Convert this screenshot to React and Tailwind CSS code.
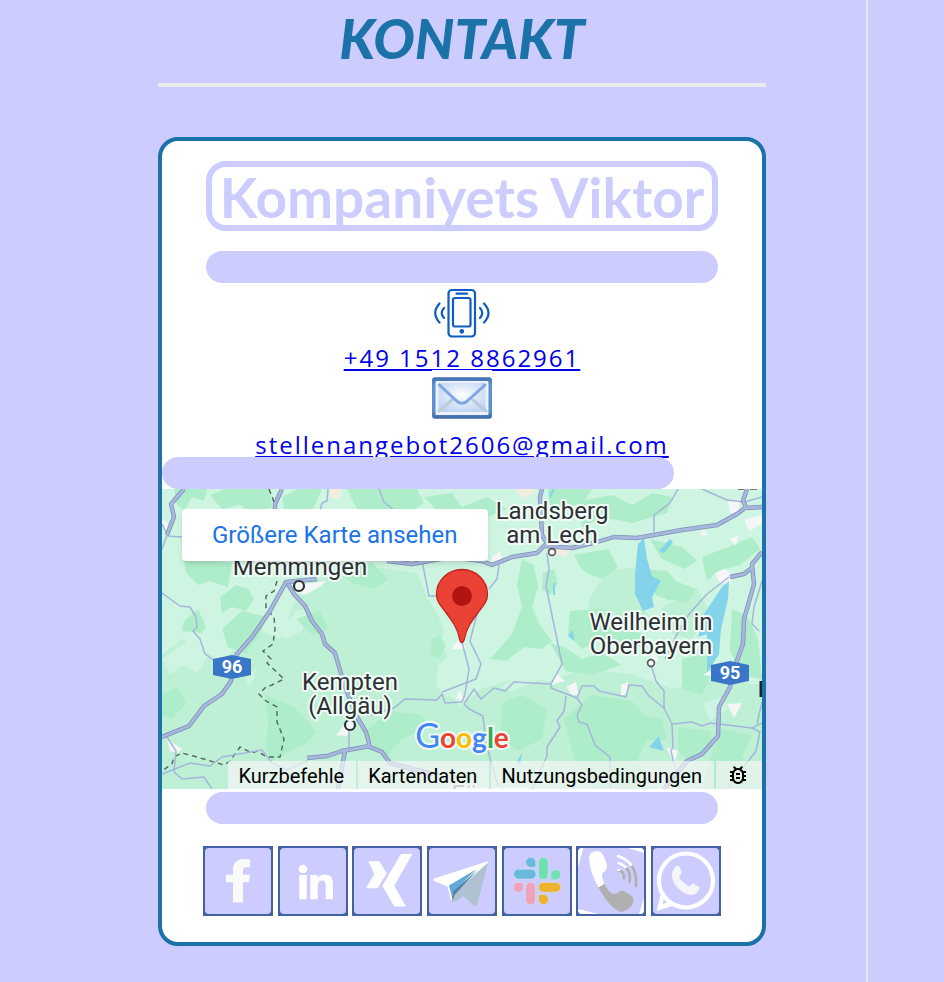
import React from "react";

const MID_PATCHES = [
  "M0 165L20 150L60 172L95 140L118 150L135 108L165 100L190 92L235 96L262 108L270 150L285 165L280 200L300 218L318 200L352 190L388 192L420 180L470 185L510 200L545 190L600 196V300H0Z",
  "M135 108L150 92L200 76L255 84L260 96L266 110L276 126L282 142L276 160L272 190L150 200Z",
  "M428 108L445 82L475 78L474 110L488 128L470 140L440 146L425 130Z",
  "M500 118L535 100L548 122L530 150L512 146L500 134Z",
];

const DARK_PATCHES = [
  "M12 0H45L42 12L30 8L22 22L14 14Z",
  "M48 6L62 0H108L110 18L94 28L78 16L60 20Z",
  "M120 8L135 0H160L150 22L122 20Z",
  "M185 0H255L262 14L240 30L214 20L196 22Z",
  "M262 8L290 4L300 18L325 8L345 20L320 30L280 26Z",
  "M386 0H430L424 10L404 22L388 18Z",
  "M418 12L450 6L470 16L490 4L510 8L505 24L470 34L440 28L420 38Z",
  "M20 60L55 72L70 74L66 98L48 92L36 96L24 84Z",
  "M58 108L74 96L86 100L92 110L84 122L70 118L60 124Z",
  "M22 132L36 120L44 138L40 144L20 142Z",
  "M60 140L80 122L106 128L96 148L84 165L66 158Z",
  "M175 80L210 74L226 90L212 100L190 94Z",
  "M134 130L158 122L166 140L150 146Z",
  "M360 70L372 76L376 98L370 118L378 136L390 152L380 160L362 158L344 172L328 170L350 145L360 118L355 96Z",
  "M381 84L392 80L396 94L388 106L380 100Z",
  "M412 66L446 60L456 78L440 90L424 84L418 78Z",
  "M478 80L506 82L520 100L508 112L494 106L486 94Z",
  "M488 50L520 58L535 72L522 80L500 70Z",
  "M540 68L566 58L590 48L598 60L578 76L556 82L545 92Z",
  "M408 122L440 120L466 140L486 146L480 158L440 150L420 160L406 146Z",
  "M388 154L402 158L420 170L440 164L460 176L430 186L404 182Z",
  "M503 88L534 100L525 114L508 110Z",
  "M570 120L586 128L596 150L600 190L578 186L568 160Z",
  "M104 206L118 212L132 218L146 232L154 244L142 256L124 264L110 272L104 258L106 236Z",
  "M270 150L278 146L284 158L276 170L268 164Z",
  "M203 242L228 222L260 226L266 238L240 250L224 268L214 260Z",
  "M340 214L360 206L385 220L380 250L356 262L338 250Z",
  "M402 230L430 206L470 212L482 226L500 230L505 250L484 252L476 270L488 300H430L412 270Z",
  "M520 170L542 164L552 180L540 206L520 200Z",
  "M516 238L548 242L552 258L528 272L516 262Z",
  "M560 240L590 246L580 268L600 284V300H540L548 270Z",
  "M0 205L16 198L24 214L10 230L0 226Z",
  "M420 262L440 256L450 276L436 290L418 280Z",
];

const LIGHT_PATCHES = [
  "M0 170L28 150L46 168L36 184L20 176L8 186Z",
  "M116 144L134 122L148 118L140 142L124 150Z",
  "M276 176L300 158L312 176L306 196L284 208L274 196Z",
  "M338 198L352 190L386 186L366 196L350 202Z",
  "M505 184L524 172L530 188L512 196Z",
  "M450 160L474 150L482 168L464 176Z",
  "M540 214L560 208L566 220L548 232Z",
  "M84 190L94 178L92 190L86 196Z",
];

const SAND_PATCHES = [
  "M168 0H180L178 10L168 9Z",
  "M352 0H374L372 4L362 9Z",
  "M388 56L412 58L402 68L388 63Z",
];

const URBAN_PATCHES = [
  "M136 96L164 92L158 98L142 106L136 103Z",
  "M330 68L338 62L340 70L330 73Z",
  "M566 12L578 10L576 24L568 24Z",
  "M583 30L600 26V34L588 42L584 36Z",
  "M537 46L542 40L546 47Z",
  "M568 50L577 46L574 57Z",
  "M289 160L296 151L304 158L303 160Z",
  "M553 84L562 80L572 86L568 95L558 94Z",
  "M389 196L395 185L403 192Z",
  "M404 198L414 193L416 206L410 206Z",
  "M459 196L466 193L465 204L459 207Z",
  "M565 215L580 214L572 229Z",
  "M174 246L184 234L192 240L184 247Z",
  "M5 250L20 260L16 264L8 262Z",
  "M294 210L298 201L301 210Z",
  "M541 186L548 181L550 187Z",
  "M504 258L516 262L512 274Z",
  "M488 168L494 164L496 172L490 174Z",
  "M0 30L6 34L4 42L0 38Z",
];

const WATER = [
  "M473 85L476 55L482 49L485 70L490 87L499 92L490 108L492 118L481 122L473 105Z",
  "M497 62L508 50L511 53L502 64Z",
  "M560 98L567 92L566 110L559 140L557 165L545 184V145L536 148L542 125Z",
  "M406 147L411 141L412 152Z",
  "M487 258L497 247L499 254L502 262Z",
  "M354 274L360 264L358 276Z",
  "M391 0H393L388 10L387 6Z",
  "M391 94H393V106H391Z",
];

const MINOR_ROADS = [
  "M385 64L387 80L384 97L400 175L389 195L389 199L415 209L420 197H432L437 202L464 208L467 196L480 197L487 207L502 219L510 235L530 233L540 237L548 234L590 239L598 243L594 262L565 300",
  "M489 176L494 192L502 202V219",
  "M510 235L511 258L509 262L518 300",
  "M590 239L600 234",
  "M389 195L352 193L343 202L332 199L319 210L312 200L302 215L307 220L321 227L324 255L337 300",
  "M300 153L307 180L303 205L300 213L283 214L280 205L275 211L243 210L232 219L205 227",
  "M315 125L308 152L319 175L314 190L280 203",
  "M260 72L267 107H275",
  "M337 76L335 90L327 100",
  "M404 207L402 222L395 232L398 238L385 258V267L370 300",
  "M415 209L420 216L415 226L417 233L425 235L433 256L448 268V300",
  "M0 104L18 117L28 118L34 128L35 138L31 142L38 150L43 165L53 172",
  "M217 0L222 13L235 24",
  "M516 0L508 14L492 26V43",
  "M540 0L565 11L583 13L600 8",
  "M567 88L545 105L527 125L515 145L503 170",
  "M0 285L28 274L48 277L60 268L100 261L110 274L125 281L145 272",
  "M5 248L14 262L12 283L20 290L42 288L50 300",
  "M187 240V262",
  "M166 0L165 12L160 14L158 22",
  "M0 35L6 47L20 48M5 46L0 60",
  "M600 92L592 118L590 135L597 142",
  "M600 213L595 235",
];

const MAJOR_ROADS = [
  "M0 248L27 237L42 217L60 205L69 192L70 180L75 165L90 148L108 122L124 93L155 90",
  "M126 95L132 105L143 117L150 132L160 145L163 155L173 164L182 195L195 228L204 243L208 258L220 263L228 274L247 279L270 285",
  "M145 269L165 267L180 262L208 257",
  "M183 262L176 300",
  "M22 0L9 15L12 28L5 46",
  "M120 0L113 15V25",
  "M225 72L250 75L290 68L320 72L330 76L350 68L375 64L385 54L380 46L378 8L380 0",
  "M383 57L410 59L435 53L452 48L475 49L520 41L555 36L575 25L583 19L600 18",
  "M585 20L581 12L585 0",
  "M600 63L590 75L592 95L582 130L581 155L572 180L568 198L557 218L556 247L540 265L525 272L502 300",
  "M568 88L582 85L591 78",
];

const PLACES = [
  { text: "Landsberg", x: 390, y: 30 },
  { text: "am Lech", x: 390, y: 54 },
  { text: "Memmingen", x: 138, y: 86 },
  { text: "Weilheim in", x: 489, y: 141 },
  { text: "Oberbayern", x: 489, y: 165 },
  { text: "Kempten", x: 188, y: 201 },
  { text: "(Allgäu)", x: 188, y: 225 },
];

function Shapes({ paths, fill }) {
  return (
    <g fill={fill}>
      {paths.map((d) => (
        <path key={d} d={d} />
      ))}
    </g>
  );
}

function Lines({ paths, stroke, width }) {
  return (
    <g fill="none" stroke={stroke} strokeWidth={width} strokeLinejoin="round">
      {paths.map((d) => (
        <path key={d} d={d} />
      ))}
    </g>
  );
}

function RoadSign({ x, y, number }) {
  return (
    <g>
      <path d={`M${x - 19} ${y - 8}L${x} ${y - 12}L${x + 19} ${y - 8}V${y + 8}L${x} ${y + 12}L${x - 19} ${y + 8}Z`} fill="#3a76c8" />
      <text x={x} y={y + 6} textAnchor="middle" className="font-bold text-[18px]" fill="#fff">
        {number}
      </text>
    </g>
  );
}

function MapDrawing() {
  return (
    <svg
      viewBox="0 0 600 300"
      preserveAspectRatio="xMidYMid slice"
      className="block h-full w-full font-['Roboto',sans-serif]"
      role="img"
      aria-label="Karte"
    >
      <rect width="600" height="300" fill="#cef5e1" />
      <Shapes paths={MID_PATCHES} fill="#bef0d5" />
      <Shapes paths={LIGHT_PATCHES} fill="#cef5e1" />
      <Shapes paths={DARK_PATCHES} fill="#aeedc9" />
      <Shapes paths={SAND_PATCHES} fill="#f3ede0" />
      <Shapes paths={URBAN_PATCHES} fill="#f5f6f7" />
      <Shapes paths={WATER} fill="#83d4ea" />
      <g fill="none" stroke="#51665c" strokeWidth="1.4" strokeDasharray="5 4">
        <path d="M107 0L111 10L114 24" />
        <path d="M115 92L112 102L104 107V120L112 128L113 140L111 155L101 162L109 170L105 174L122 190L110 196L104 198L97 205L104 212L115 218V233L122 250L118 268L105 268L95 262L90 264L78 258L68 272L62 276L35 268L20 264L12 268L10 275L0 282" />
      </g>
      <Lines paths={MINOR_ROADS} stroke="#a5b5db" width="1.5" />
      <Lines paths={MAJOR_ROADS} stroke="#7e8fbb" width="4.4" />
      <Lines paths={MAJOR_ROADS} stroke="#a8b8dc" width="2.8" />
      <g fill="#f5f6f7" stroke="#2d3035">
        <circle cx="137" cy="97" r="5" strokeWidth="2.2" />
        <circle cx="188" cy="236" r="5" strokeWidth="2.2" />
        <circle cx="390" cy="63" r="3.4" strokeWidth="1.6" stroke="#555" />
        <circle cx="489" cy="174" r="3.4" strokeWidth="1.6" stroke="#555" />
      </g>
      <g
        className="text-[24px]"
        textAnchor="middle"
        fill="#2d3035"
        stroke="#f1fcf6"
        strokeWidth="4"
        strokeLinejoin="round"
        paintOrder="stroke"
      >
        {PLACES.map((place) => (
          <text key={place.text} x={place.x} y={place.y}>
            {place.text}
          </text>
        ))}
        <text x="328" y="313" fill="#777">
          Füssen
        </text>
      </g>
      <path d="M599 192V208" stroke="#1f2226" strokeWidth="3" />
      <path d="M576 0H582M588 0H595" stroke="#777" strokeWidth="2" />
      <RoadSign x={70} y={178} number="96" />
      <RoadSign x={568} y={184} number="95" />
      <path
        d="M300 153.500C298.500 153.500 298 152 297.500 149.500C295.500 139 290 131.500 283.500 123C278 116 274.500 112 274.500 105.500A25.500 25 0 0 1 325.500 105.500C325.500 112 322 116 316.500 123C310 131.500 304.500 139 302.500 149.500C302 152 301.500 153.500 300 153.500Z"
        fill="#ea4335"
        stroke="#c5221f"
        strokeWidth="1.300"
      />
      <circle cx="300" cy="107" r="10" fill="#b31412" />
      <text
        x="300"
        y="259"
        textAnchor="middle"
        className="font-['Lato',sans-serif] text-[28px] font-bold"
        strokeWidth="4"
        stroke="#eefaf4"
        paintOrder="stroke"
      >
        <tspan fill="#4285f4" className="text-[34px] font-normal">G</tspan>
        <tspan fill="#ea4335">o</tspan>
        <tspan fill="#fbbc04">o</tspan>
        <tspan fill="#4285f4">g</tspan>
        <tspan fill="#34a853">l</tspan>
        <tspan fill="#ea4335">e</tspan>
      </text>
    </svg>
  );
}

function BugIcon() {
  return (
    <svg viewBox="0 0 24 24" className="size-6" fill="currentColor" aria-hidden="true">
      <path d="M20 8h-2.810c-.45-.78-1.070-1.450-1.820-1.960L17 4.410 15.590 3l-2.170 2.170C12.960 5.060 12.490 5 12 5s-.96.060-1.410.17L8.410 3 7 4.410l1.620 1.630C7.880 6.550 7.260 7.220 6.810 8H4v2h2.090c-.05.330-.09.660-.09 1v1H4v2h2v1c0 .34.040.67.090 1H4v2h2.810c1.040 1.790 2.970 3 5.190 3s4.150-1.210 5.190-3H20v-2h-2.090c.05-.33.090-.66.090-1v-1h2v-2h-2v-1c0-.34-.04-.67-.09-1H20V8zm-4 7c0 2.210-1.790 4-4 4s-4-1.790-4-4v-4c0-2.210 1.790-4 4-4s4 1.790 4 4v4zm-6-1h4v2h-4v-2zm0-4h4v2h-4v-2z" />
    </svg>
  );
}

const footerItem = "flex h-full items-center bg-[#f5f5f5]/70 pl-[10px] pr-3 pt-[2px]";

function MapFrame() {
  return (
    <section className="relative h-[300px] overflow-hidden font-['Roboto',sans-serif]" aria-label="Standort">
      <MapDrawing />
      <a
        href="#karte"
        className="absolute left-5 top-5 flex h-[52px] items-center rounded-[4px] bg-white px-[30px] text-[24px] text-[#1a73e8] shadow-md"
      >
        Größere Karte ansehen
      </a>
      <div className="absolute bottom-0 right-0 flex h-7 gap-[2px] whitespace-nowrap text-[20px] text-black">
        <button type="button" className={footerItem}>Kurzbefehle</button>
        <button type="button" className={footerItem}>Kartendaten</button>
        <a href="#nutzungsbedingungen" className={footerItem}>Nutzungsbedingungen</a>
        <button type="button" aria-label="Fehler melden" className="flex h-full w-[46px] items-center justify-center bg-[#f5f5f5]/70 pr-[2px]">
          <BugIcon />
        </button>
      </div>
    </section>
  );
}

function PhoneIcon() {
  return (
    <svg viewBox="0 0 60 60" className="size-[60px]" fill="none" stroke="#0f5dc0" strokeWidth="2.2" strokeLinecap="round" aria-hidden="true">
      <rect x="16.500" y="7" width="26.500" height="46.500" rx="3.500" />
      <rect x="21" y="15" width="17.500" height="28.500" rx="2" />
      <path d="M24.500 10.700H35" />
      <circle cx="29.800" cy="48.300" r="1.300" fill="#0f5dc0" />
      <path d="M7.500 20.500Q-1 30 7.500 39.500M12 25Q7.500 30 12 35M52 20.500Q61 30 52 39.500M48 25Q52.500 30 48 35" />
    </svg>
  );
}

function MailIcon() {
  return (
    <svg viewBox="0 0 60 60" className="relative -mt-[2px] size-[60px] bg-white" aria-hidden="true">
      <defs>
        <linearGradient id="mail-frame" x1="0" y1="0" x2="0" y2="1">
          <stop offset="0" stopColor="#3f6fae" />
          <stop offset=".2" stopColor="#5b93d2" />
          <stop offset=".8" stopColor="#5a90cf" />
          <stop offset="1" stopColor="#3d6aa6" />
        </linearGradient>
        <radialGradient id="mail-paper" cx=".5" cy=".4" r=".65">
          <stop offset="0" stopColor="#ffffff" />
          <stop offset=".5" stopColor="#dbe8fa" />
          <stop offset="1" stopColor="#bdd2f5" />
        </radialGradient>
      </defs>
      <rect y="7.300" width="60" height="41.400" rx="3" fill="url(#mail-frame)" />
      <rect x="3.500" y="11" width="53" height="34" rx="1" fill="#eef2f6" />
      <rect x="6.500" y="13" width="47" height="29" fill="url(#mail-paper)" />
      <path d="M7 41L20 30M54 41L41 30" stroke="#b9cbd8" strokeWidth="3" strokeLinecap="round" />
      <path d="M7.500 15L23 29.500Q30 37 37 29.500L53 15" fill="none" stroke="#7fa6e2" strokeWidth="3" strokeLinecap="round" />
    </svg>
  );
}

const SOCIAL = [
  {
    name: "Facebook",
    art: <path fill="#fafafa" d="M30 56.500V36.300H23V28.700H30V24C30 17 34 13.300 40 13.300H47V21.300H43.500C41 21.300 40 22.500 40 25V28.700H47L46 36.300H40V56.500Z" />,
  },
  {
    name: "LinkedIn",
    art: (
      <g fill="#fff">
        <circle cx="25" cy="23" r="4.300" />
        <rect x="21.300" y="29" width="7.400" height="24.300" />
        <path d="M32.300 53.300V29H39.300V32.300C41 29.500 44 28.400 47 28.400C53 28.400 55 32 55 38.500V53.300H47.700V40C47.700 36 46.500 34.500 44 34.500C41 34.500 39.700 36.500 39.700 40V53.300Z" />
      </g>
    ),
  },
  {
    name: "Xing",
    art: <path fill="#fff" d="M16.300 15.300H27.300L34.700 27.300L25.700 42.300H14L22.300 28ZM49 8H60.300L42.300 39.700L54 60.500H42.300L30.300 39.700Z" />,
  },
  {
    name: "Telegram",
    art: (
      <g>
        <path d="M61 16.500L50 59.500Q49 61.500 47.500 60L36 50L31 54L25 56L26 46Z" fill="#b0c2d1" />
        <path d="M7 32.500L60 15.500Q62 15.500 60.500 17.500L24 55L20.500 40.500L7 35Q6 33.500 7 32.500Z" fill="#fff" />
        <path d="M61 16.500L26.500 48L24 56L36 50Z" fill="#b0c2d1" />
        <path d="M22 39.500L49 23.500L26.500 46L25 51Z" fill="#61a8dc" />
        <path d="M25 51L26.500 45L51 23.500L28 48.500L25.500 54Z" fill="#5583a6" />
      </g>
    ),
  },
  {
    name: "Slack",
    art: (
      <g stroke="#d9e6f8" strokeWidth=".5">
        <g fill="#68b9db">
          <rect x="11.700" y="23.300" width="22.300" height="9.700" rx="4.800" />
          <path d="M33.700 21.300V16.300A5 5 0 1 0 28.700 21.300Z" />
        </g>
        <g fill="#70e0b0">
          <rect x="36.500" y="11.300" width="9.700" height="22.300" rx="4.800" />
          <path d="M48.700 33.700H53.700A5 5 0 1 0 48.700 28.700Z" />
        </g>
        <g fill="#f0a2b9">
          <rect x="23.700" y="36.500" width="9.700" height="22.300" rx="4.800" />
          <path d="M21.300 36.500H16.300A5 5 0 1 0 21.300 41.500Z" />
        </g>
        <g fill="#edb22e">
          <rect x="36.500" y="36.500" width="22.300" height="9.700" rx="4.800" />
          <path d="M36.500 48.500V53.500A5 5 0 1 0 41.500 48.500Z" />
        </g>
      </g>
    ),
  },
  {
    name: "Telefon",
    art: (
      <g>
        <defs>
          <linearGradient id="wave-tone" gradientUnits="userSpaceOnUse" x1="48" y1="17" x2="52" y2="27">
            <stop offset=".5" stopColor="#fff" />
            <stop offset=".5" stopColor="#b0b0b0" />
          </linearGradient>
          <linearGradient id="handset-tone" gradientUnits="userSpaceOnUse" x1="22" y1="35" x2="28" y2="45">
            <stop offset=".5" stopColor="#fff" />
            <stop offset=".5" stopColor="#b0b0b0" />
          </linearGradient>
        </defs>
        <rect x="2" y="2" width="66" height="66" rx="4" fill="#fff" />
        <path d="M2 21L7.500 2H52L68 7V52L63 68H22L2 63Z" fill="#ccf" />
        <path
          d="M15 7Q19 4 24 5.500Q27 6.500 31 19Q31.500 24 26.500 27Q24 32 32 44Q37 50 42 47Q44 44 48 45L56 50Q59 54 56 59Q51 65 45 66Q36 64 25 46Q14 28 13 13Q13 9 15 7Z"
          fill="url(#handset-tone)"
        />
        <g fill="none" stroke="url(#wave-tone)" strokeWidth="2.600" strokeLinecap="round">
          <path d="M42 10Q62 17 60 40" />
          <path d="M42.500 17Q56 22 53.500 36" />
          <path d="M42.500 24Q49 26 48 32.500" />
        </g>
      </g>
    ),
  },
  {
    name: "WhatsApp",
    art: (
      <g>
        <circle cx="35" cy="34.500" r="27" fill="none" stroke="#fff" strokeWidth="4.200" />
        <path d="M10 47L5.700 65L21 60L19 55.500L11.500 58L14.500 46.500Z" fill="#fff" />
        <path
          d="M24 21Q26 19.500 28.500 20.500L30.500 26Q31 28 28 30.500Q31 37 38.500 40.500L42 37.500L48.500 41Q48 48 40 49Q31 48 23.500 38Q18 28 24 21Z"
          fill="#f6f6fa"
        />
      </g>
    ),
  },
];

function Bar({ className = "" }) {
  return <div className={`relative h-8 w-full max-w-[512px] rounded-full bg-[#ccf] ${className}`} />;
}

const contactLink = "text-[24px] font-medium leading-[29px] tracking-[2px] text-[#0000ee] underline";

export default function App() {
  return (
    <div className="min-h-screen bg-[#ccf] pl-[58px] pr-[76px]">
      <main className="flex min-h-screen flex-col items-center border-r-2 border-[#e6e6f0]">
        <h1 className="w-full max-w-[608px] border-b-4 border-[#ebebeb] pb-[15px] pt-2 text-center font-['Lato',sans-serif] text-[55px] font-black italic leading-[60px] text-[#1b72a8]">
          KONTAKT
        </h1>
        <article className="mt-[50px] w-full max-w-[608px] rounded-[20px] border-4 border-[#1b72a8] bg-white pb-[26px] pt-5">
          <h2 className="mx-auto h-[70px] w-full max-w-[512px] whitespace-nowrap rounded-[20px] border-[6px] border-[#ccf] text-center font-['Lato',sans-serif] text-[55px] font-bold leading-[60px] text-[#ccf]">
            Kompaniyets Viktor
          </h2>
          <Bar className="mx-auto mt-5" />
          <address className="flex flex-col items-center font-['Open_Sans',sans-serif] not-italic">
            <PhoneIcon />
            <a href="tel:+4915128862961" className={contactLink}>+49 1512 8862961</a>
            <MailIcon />
            <a href="mailto:stellenangebot2606@gmail.com" className={contactLink}>stellenangebot2606@gmail.com</a>
          </address>
          <Bar className="-mt-[2px]" />
          <MapFrame />
          <Bar className="mx-auto mt-[3px]" />
          <nav className="mx-auto mt-[22px] flex w-full max-w-[518px] justify-between" aria-label="Soziale Netzwerke">
            {SOCIAL.map(({ name, art }) => (
              <a key={name} href={`#${name.toLowerCase()}`} aria-label={name} className="block size-[70px]">
                <svg viewBox="0 0 70 70" className="block size-full" aria-hidden="true">
                  <rect width="70" height="70" fill="#4262a5" />
                  <rect x="2" y="2" width="66" height="66" rx="4" fill="#ccf" />
                  {art}
                </svg>
              </a>
            ))}
          </nav>
        </article>
      </main>
    </div>
  );
}
